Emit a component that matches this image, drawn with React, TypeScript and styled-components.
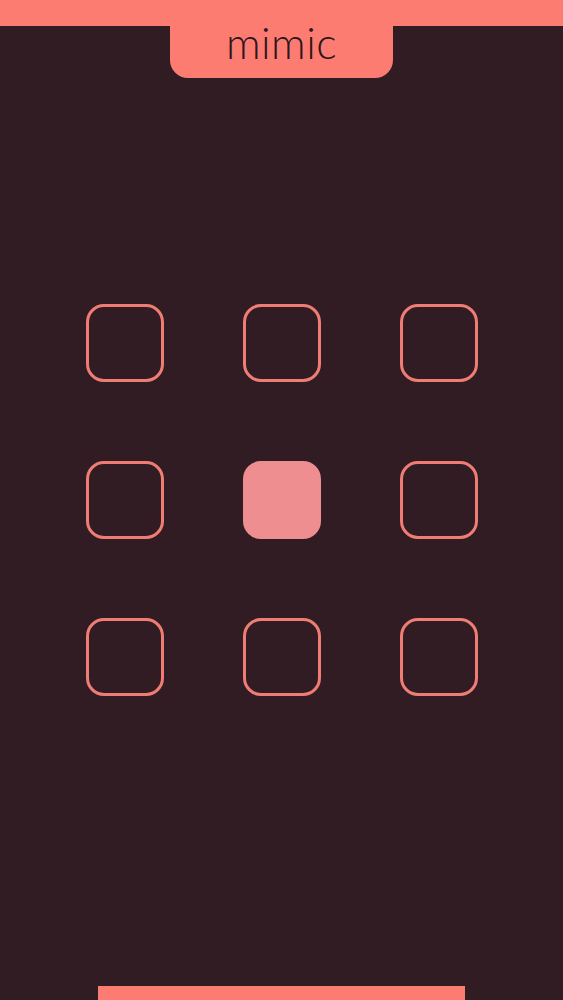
import React from 'react'
import styled, { createGlobalStyle } from 'styled-components'

const GlobalStyle = createGlobalStyle`
  html, body {
    margin: 0;
    padding: 0;
    background: #321c24;
  }
`

const Page = styled.div`
  display: flex;
  flex-direction: column;
  height: 100vh;
  background: #321c24;
  font-family: 'Lato', 'Open Sans', sans-serif;
  overflow: hidden;
`

const Header = styled.header`
  display: flex;
  flex-direction: column;
  align-items: center;
`

const TopBar = styled.div`
  align-self: stretch;
  height: 26px;
  background: #fd7c72;
`

const Tab = styled.div`
  width: 223px;
  height: 53px;
  margin-top: -1px;
  background: #fd7c72;
  border-radius: 0 0 18px 18px;
  display: flex;
  justify-content: center;
  align-items: flex-start;
`

const Title = styled.h1`
  margin: 0;
  margin-top: -8px;
  font-size: 43px;
  font-weight: 300;
  letter-spacing: 0.5px;
  color: #2e151c;
`

const Main = styled.main`
  flex: 1;
  display: flex;
  align-items: center;
  justify-content: center;
  padding-bottom: 64px;
`

const Grid = styled.div`
  display: grid;
  grid-template-columns: repeat(3, 78px);
  grid-auto-rows: 78px;
  gap: 79px;
`

const Cell = styled.div<{ $active?: boolean }>`
  box-sizing: border-box;
  border-radius: 18px;
  border: 3px solid ${p => (p.$active ? '#ee8e90' : '#f07d74')};
  background: ${p => (p.$active ? '#ee8e90' : 'transparent')};
`

const FooterBar = styled.footer`
  width: 367px;
  height: 14px;
  margin: 0 auto;
  background: #fd7c72;
`

const cells = [0, 1, 2, 3, 4, 5, 6, 7, 8]

const App: React.FC = () => (
  <>
    <GlobalStyle />
    <Page>
      <Header>
        <TopBar />
        <Tab>
          <Title>mimic</Title>
        </Tab>
      </Header>
      <Main>
        <Grid>
          {cells.map(i => (
            <Cell key={i} $active={i === 4} />
          ))}
        </Grid>
      </Main>
      <FooterBar />
    </Page>
  </>
)

export default App
